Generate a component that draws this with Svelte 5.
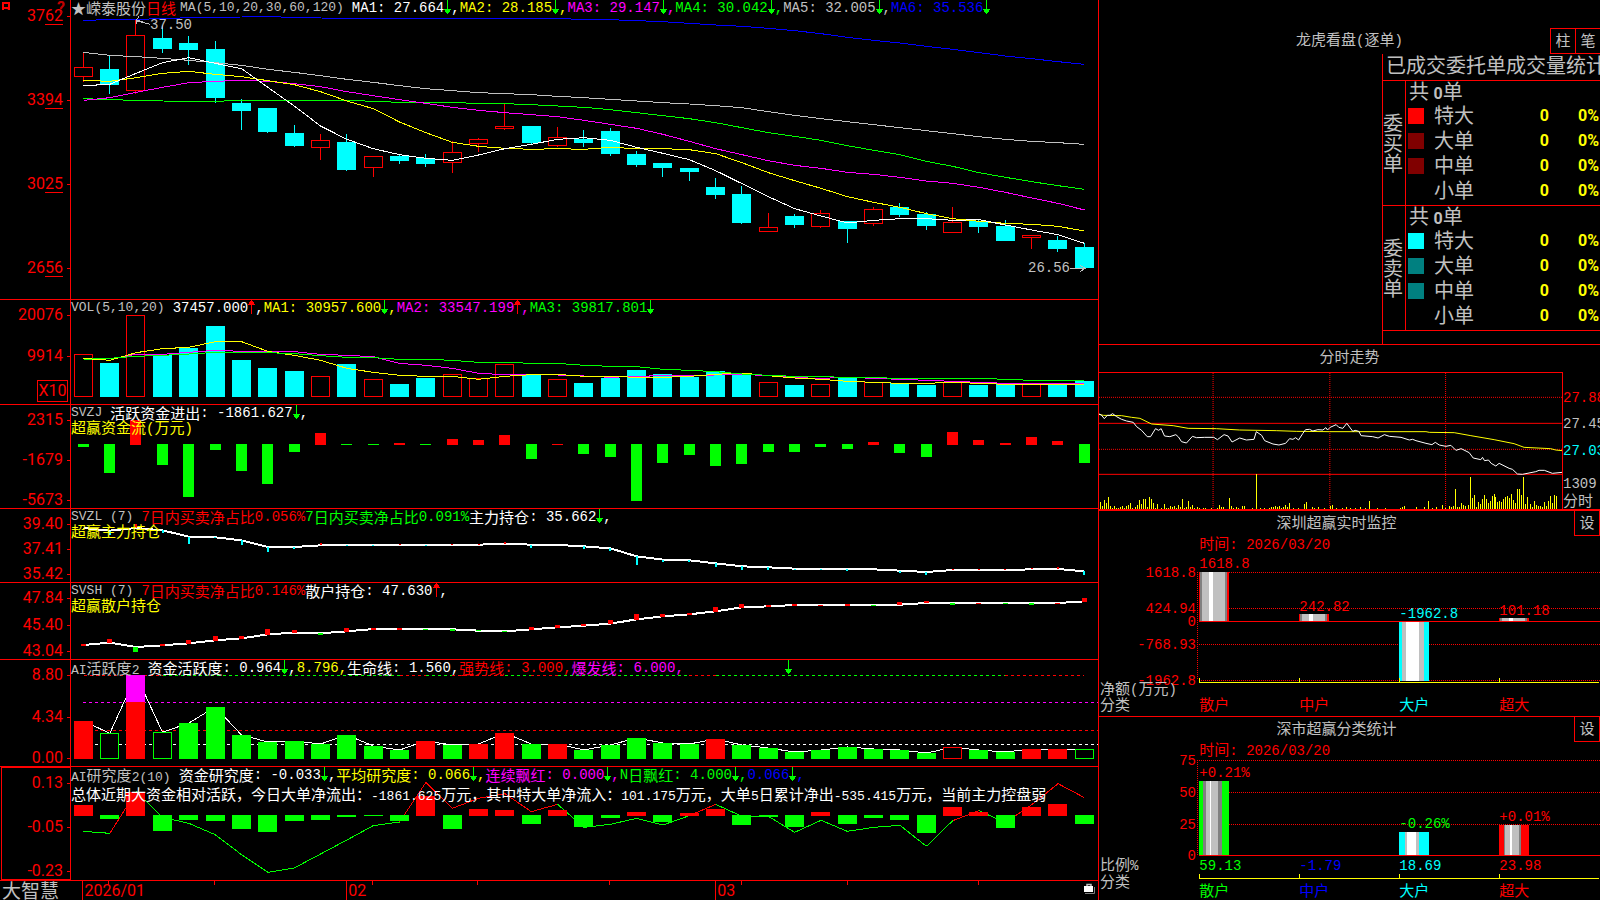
<script lang="ts">
	type Part = { t: string; c?: string; dir?: 'up' | 'down'; comma?: boolean };
	type Label = { x: number; y: number; t: string; c: string; end?: boolean };

	const STEP = 26.34;
	const X = (i: number) => 12.5 + STEP * i;
	const left = (i: number, w: number) => Math.round(X(i) - w / 2 - 0.2);
	const path = (ys: number[]) => ys.map((y, i) => `${X(i)},${y}`).join(' ');

	// Splits a string into runs of Chinese and of latin characters
	const runs = (s: string) => s.match(/[\u3000-\u9fff\uff00-\uffef]+|[^\u3000-\u9fff\uff00-\uffef]+/g) ?? [];
	const isHan = (s: string) => /^[\u3000-\u9fff\uff00-\uffef]/.test(s);

	// up?, body top, body bottom, high, low
	const candles = [
		[1,202,230,157,245],[0,207,255,167,282],[1,106,272,60,282],[0,114,147,75,159],[0,129,150,108,195],
		[0,147,294,123,309],[0,309,333,297,390],[0,324,396,324,399],[0,399,438,375,441],[1,421,443,402,480],
		[0,426,510,402,513],[1,469,503,469,531],[0,468,483,462,492],[0,474,492,462,501],[1,457,488,423,519],
		[1,418,431,414,456],[1,379,386,312,390],[0,378,429,378,432],[1,412,437,381,440],[0,417,429,390,441],
		[0,393,462,384,468],[0,462,495,453,501],[0,489,504,489,531],[0,504,516,504,543],[0,561,585,534,597],
		[0,582,669,558,672],[1,682,695,639,695],[0,648,675,642,684],[1,640,680,630,684],[0,663,687,663,729],
		[1,628,671,621,678],[0,621,645,609,651],[0,642,678,636,690],[1,667,698,621,698],[0,663,681,660,699],
		[0,678,723,660,723],[1,706,713,706,747],[0,720,747,708,756],[0,741,804,729,804]
	];

	const averages = [
		{ c: 'blue', y: [61,59,58,56,53,52,51,49,53,54,55,55,55,55,55,55,55,55,56,58,59,62,65,70,75,79,85,92,101,112,121,129,139,148,158,168,176,185,193] },
		{ c: 'gray', y: [157,166,170,175,181,188,196,208,217,227,238,247,257,266,272,278,281,284,289,293,298,303,308,312,317,323,335,346,356,365,374,383,392,401,410,418,424,428,433] },
		{ c: 'green', y: [296,299,301,303,304,304,301,301,301,301,301,304,307,307,308,310,311,314,318,322,329,338,347,356,368,383,398,409,421,437,451,464,484,499,518,532,545,557,568] },
		{ c: 'magenta', y: [301,293,277,262,248,244,241,244,251,260,275,287,299,310,322,331,338,344,350,361,373,385,403,424,446,464,482,496,505,517,523,532,543,550,562,577,594,610,630] },
		{ c: 'yellow', y: [241,244,233,220,214,223,230,242,254,275,303,326,366,398,427,439,445,448,446,448,442,446,446,449,461,488,518,542,565,590,607,622,641,656,664,670,673,679,693] },
		{ c: 'white', y: [257,253,220,188,173,190,206,262,318,378,418,446,464,475,481,465,446,433,418,413,421,442,460,479,512,551,590,626,648,669,661,656,656,661,659,675,690,704,730] }
	];

	const volumes = [193,219,76,195,174,108,210,234,243,259,222,268,282,264,253,265,223,255,268,279,264,240,252,261,243,252,276,286,283,261,277,279,285,277,285,282,283,285,273];
	const volumeAverages = [
		{ c: 'magenta', y: [205,207,193,193,187,181,184,185,185,193,196,200,220,226,235,250,254,254,255,258,262,259,257,256,255,253,257,263,265,262,265,268,271,274,277,280,280,280,280] },
		{ c: 'yellow', y: [205,211,188,176,172,155,155,184,196,211,235,247,256,259,259,268,259,254,253,259,259,262,262,259,253,249,257,264,268,274,277,280,280,277,280,283,283,283,283] },
		{ c: 'green', y: [208,205,199,196,192,187,187,188,191,197,202,203,208,208,211,217,217,220,220,226,229,230,238,241,245,252,256,259,260,262,263,265,265,265,265,268,271,271,271] }
	];

	// Bars that hang below the zero line are green, those above it red
	const flow = [471,549,390,525,621,480,543,582,486,429,465,465,459,465,447,450,435,507,462,492,501,633,519,495,528,522,486,486,471,477,456,489,501,426,450,459,441,453,519];
	const research = [465,507,426,543,510,513,537,546,513,510,501,499,513,438,537,477,480,522,480,531,504,486,516,489,477,525,501,531,486,522,504,510,549,471,486,534,471,462,522];

	const mainHold = [84,92,84,91,110,112,121,141,141,136,135,135,135,135,135,134,131,134,135,139,145,169,179,181,190,199,202,206,207,207,208,212,216,210,210,210,208,207,214];
	const mainTicks = [
		[1,104],[3,98],[4,132],[5,114],[6,134],[7,155],[8,146],[10,138],[11,138],[13,138],[17,143],[19,147],[20,153],[21,195],[22,185],[23,185],
		[24,201],[25,209],[26,209],[27,209],[28,210],[29,212],[31,218],[32,225],[38,225],
		[2,72],[9,129],[12,133],[14,132],[15,131],[16,126],[30,206],[33,206],[34,207],[35,208],[36,204],[37,201]
	];

	const retailHold = [435,428,441,436,430,421,415,403,398,400,394,387,386,387,388,392,394,388,382,377,371,358,349,343,334,322,319,315,315,315,316,314,309,309,309,309,309,309,304];
	const retailMarks = [
		[432,438],[417,429],[441,456],[432,438],[420,432],[408,423],[408,417],[387,405],[390,399],[399,405],[384,396],[384,390],[384,390],
		[387,390],[387,393],[390,393],[393,396],[381,390],[375,384],[372,378],[360,372],[342,360],[342,351],[339,345],[321,336],[312,324],
		[315,321],[312,318],[315,318],[312,318],[315,318],[306,315],[303,309],[309,315],[309,312],[309,312],[309,315],[309,312],[294,306]
	];
	const retailGreen = [2, 9, 13, 14, 15, 16, 30, 33, 35, 36];

	const active = [213,250,76,247,219,171,255,276,273,282,255,288,300,273,285,282,249,282,282,300,285,264,279,282,267,285,294,306,300,291,297,300,309,292,300,306,297,297,298];
	const activeRed = [0, 2, 13, 15, 16, 18, 24, 33, 36, 37];
	const activeHollow = [1, 3, 33, 38];
	// Turning points of the colour of the top dashed line
	const topDashes = [0, 3, 12, 13, 14, 16, 17, 18, 23, 24, 35, 38];

	const researchLine = [544,550,425,502,520,554,614,667,654,612,570,527,516,397,475,445,431,485,463,532,523,505,525,497,463,499,499,547,511,544,532,526,589,512,482,518,464,401,443];
	const redLegs = [1, 12, 13, 14, 15, 16, 17, 23, 33, 35, 36, 37];

	const months = [{ i: 0, t: '2026/01' }, { i: 10, t: '02' }, { i: 24, t: '03' }];
	const weeks = [1, 5, 11, 15, 20, 25, 29, 34];

	const mainHead: Part[] = [
		{ t: 'MA1: 27.664', c: 'white', dir: 'down', comma: true },
		{ t: 'MA2: 28.185', c: 'yellow', dir: 'down', comma: true },
		{ t: 'MA3: 29.147', c: 'magenta', dir: 'down', comma: true },
		{ t: 'MA4: 30.042', c: 'green', dir: 'down', comma: true },
		{ t: 'MA5: 32.005', c: 'gray', dir: 'down', comma: true },
		{ t: 'MA6: 35.536', c: 'blue', dir: 'down' }
	];
	const volHead: Part[] = [
		{ t: '37457.000', c: 'white', dir: 'up', comma: true },
		{ t: 'MA1: 30957.600', c: 'yellow', dir: 'down', comma: true },
		{ t: 'MA2: 33547.199', c: 'magenta', dir: 'up', comma: true },
		{ t: 'MA3: 39817.801', c: 'green', dir: 'down' }
	];
	const flowHead: Part[] = [{ t: '活跃资金进出: -1861.627', c: 'white', dir: 'down', comma: true }];
	const mainHoldHead: Part[] = [
		{ t: '7日内买卖净占比0.056%', c: 'red' },
		{ t: '7日内买卖净占比0.091%', c: 'green' },
		{ t: '主力持仓: 35.662', c: 'white', dir: 'down', comma: true }
	];
	const retailHead: Part[] = [
		{ t: '7日内买卖净占比0.146%', c: 'red' },
		{ t: '散户持仓: 47.630', c: 'white', dir: 'up', comma: true }
	];
	const activeHead: Part[] = [
		{ t: '资金活跃度: 0.964', c: 'white', dir: 'down', comma: true },
		{ t: '8.796,', c: 'yellow' },
		{ t: '生命线: 1.560,', c: 'white' },
		{ t: '强势线: 3.000,', c: 'red' },
		{ t: '爆发线: 6.000,', c: 'magenta' },
		{ t: '            ', dir: 'down' }
	];
	const researchHead: Part[] = [
		{ t: '资金研究度: -0.033', c: 'white', dir: 'down', comma: true },
		{ t: '平均研究度: 0.066', c: 'yellow', dir: 'down', comma: true },
		{ t: '连续飘红: 0.000', c: 'magenta', dir: 'down', comma: true },
		{ t: 'N日飘红: 4.000', c: 'green', dir: 'down', comma: true },
		{ t: '0.066', c: 'blue', dir: 'down', comma: true }
	];

	const orders = [
		{ side: '委买单', swatches: ['#f00', '#800000', '#800000', 'transparent'] },
		{ side: '委卖单', swatches: ['#0ff', '#008080', '#008080', 'transparent'] }
	];
	const sizes = ['特大', '大单', '中单', '小单'];

	const avgPrice = '27,223 40,226 95,227 125,232 150,235 185,252 250,257 295,265 380,266 450,270 560,272 620,274 720,275 1010,275 1020,277 1095,278 1145,287 1215,299 1275,311 1305,322 1385,326 1400,330 1420,332';
	const price = '27,222 34,225 43,236 52,226 60,226 68,221 80,230 95,238 110,243 130,247 140,260 155,271 172,290 182,290 197,266 206,271 214,266 224,288 240,290 258,284 266,291 275,305 290,309 308,289 320,293 345,292 372,292 383,299 403,284 415,288 427,306 450,294 470,300 493,298 500,275 516,286 525,302 550,312 568,315 588,310 600,296 610,298 618,293 627,300 640,280 648,269 660,268 670,273 685,269 700,270 709,263 714,270 722,262 740,254 748,262 760,265 772,250 790,274 797,271 808,274 815,287 850,290 866,294 885,284 900,289 935,292 960,300 970,298 980,302 1010,310 1028,314 1038,307 1050,315 1070,319 1085,316 1100,331 1116,326 1140,338 1152,354 1175,359 1180,352 1186,362 1198,360 1206,370 1220,378 1230,370 1260,385 1270,388 1285,402 1300,403 1340,395 1350,391 1366,391 1390,400 1420,397';
	const ticks = [
		[31,486],[37,499],[43,480],[49,490],[55,471],[61,498],[67,504],[73,498],[79,504],[85,504],[91,501],[97,498],[103,504],[109,498],[115,495],[121,489],
		[127,504],[136,501],[142,495],[148,480],[154,492],[160,477],[166,477],[172,501],[178,471],[184,477],[190,489],[196,504],[202,492],[214,504],[223,492],
		[229,504],[235,504],[241,498],[247,501],[253,498],[259,504],[265,495],[271,501],[277,477],[283,504],[289,501],[295,483],[301,501],[307,495],[313,504],
		[322,501],[328,504],[340,504],[346,504],[364,504],[382,504],[388,495],[394,501],[400,501],[418,474],[424,498],[430,504],[439,501],[445,504],[457,498],
		[463,498],[487,504],[499,402],[511,504],[523,504],[538,504],[544,501],[550,501],[556,498],[562,501],[568,498],[574,504],[580,501],[586,495],[592,501],
		[598,489],[610,504],[625,504],[643,492],[649,486],[667,501],[673,504],[685,501],[703,504],[724,498],[730,495],[742,504],[760,504],[772,501],[784,504],
		[799,504],[814,501],[829,504],[841,483],[865,504],[889,504],[934,504],[940,501],[946,498],[982,501],[1006,501],[1018,483],[1030,504],[1042,501],
		[1060,495],[1069,504],[1081,498],[1087,501],[1093,498],[1099,447],[1105,501],[1111,501],[1117,489],[1123,495],[1129,498],[1138,495],[1144,411],
		[1150,474],[1156,465],[1162,501],[1168,486],[1174,492],[1180,477],[1186,465],[1192,477],[1198,489],[1204,483],[1210,468],[1216,462],[1219,471],
		[1225,486],[1231,483],[1237,486],[1243,477],[1249,471],[1255,468],[1261,474],[1267,462],[1273,480],[1279,489],[1285,447],[1291,447],[1297,465],
		[1303,411],[1309,492],[1315,471],[1324,492],[1330,501],[1336,483],[1342,495],[1348,498],[1354,498],[1360,501],[1366,486],[1372,498],[1378,483],
		[1384,468],[1390,489],[1396,465],[1402,468]
	];

	const netLabels: Label[] = [
		{ x: 328, y: 116, t: '时间: 2026/03/20', c: 'red' },
		{ x: 318, y: 205, t: '1618.8', c: 'red', end: true },
		{ x: 318, y: 313, t: '424.94', c: 'red', end: true },
		{ x: 318, y: 352, t: '0', c: 'red', end: true },
		{ x: 318, y: 421, t: '-768.93', c: 'red', end: true },
		{ x: 318, y: 529, t: '-1962.8', c: 'red', end: true },
		{ x: 328, y: 178, t: '1618.8', c: 'red' },
		{ x: 628, y: 305, t: '242.82', c: 'red' },
		{ x: 928, y: 326, t: '-1962.8', c: 'cyan' },
		{ x: 1228, y: 317, t: '101.18', c: 'red' },
		{ x: 30, y: 553, t: '净额(万元)', c: 'gray' },
		{ x: 30, y: 601, t: '分类', c: 'gray' },
		{ x: 328, y: 601, t: '散户', c: 'red' },
		{ x: 628, y: 601, t: '中户', c: 'red' },
		{ x: 928, y: 601, t: '大户', c: 'cyan' },
		{ x: 1228, y: 601, t: '超大', c: 'red' }
	];
	const shareLabels: Label[] = [
		{ x: 328, y: 149, t: '时间: 2026/03/20', c: 'red' },
		{ x: 318, y: 184, t: '75', c: 'red', end: true },
		{ x: 318, y: 280, t: '50', c: 'red', end: true },
		{ x: 318, y: 376, t: '25', c: 'red', end: true },
		{ x: 318, y: 468, t: '0', c: 'red', end: true },
		{ x: 328, y: 220, t: '+0.21%', c: 'red' },
		{ x: 928, y: 373, t: '-0.26%', c: 'green' },
		{ x: 1228, y: 352, t: '+0.01%', c: 'red' },
		{ x: 328, y: 497, t: '59.13', c: 'green' },
		{ x: 628, y: 497, t: '-1.79', c: 'blue' },
		{ x: 928, y: 497, t: '18.69', c: 'cyan' },
		{ x: 1228, y: 497, t: '23.98', c: 'red' },
		{ x: 30, y: 494, t: '比例%', c: 'gray' },
		{ x: 30, y: 546, t: '分类', c: 'gray' },
		{ x: 328, y: 572, t: '散户', c: 'green' },
		{ x: 628, y: 572, t: '中户', c: 'blue' },
		{ x: 928, y: 572, t: '大户', c: 'cyan' },
		{ x: 1228, y: 572, t: '超大', c: 'red' }
	];

	// Each cylinder is a row of vertical stripes: [start, colour]
	type Cylinder = { x: number; y: number; b: number; s: [number, string][] };
	const redTube: [number, string][] = [[0, '#f00'], [3, '#808080'], [9, '#c0c0c0'], [30, '#fff'], [42, '#c0c0c0'], [78, '#808080'], [84, '#f00']];
	const netBars: Cylinder[] = [
		{ x: 327, y: 201, b: 348, s: redTube },
		{ x: 627, y: 327, b: 348, s: redTube },
		{ x: 927, y: 351, b: 528, s: [[0, '#0ff'], [9, '#c0c0c0'], [21, '#fff'], [60, '#c0c0c0'], [75, '#0ff']] },
		{ x: 1227, y: 339, b: 348, s: redTube }
	];
	const shareBars: Cylinder[] = [
		{ x: 327, y: 243, b: 465, s: [[0, '#0f0'], [12, '#808080'], [21, '#c0c0c0'], [33, '#fff'], [36, '#c0c0c0'], [57, '#808080'], [69, '#0f0']] },
		{ x: 927, y: 396, b: 465, s: [[0, '#0ff'], [18, '#c0c0c0'], [24, '#fff'], [51, '#c0c0c0'], [60, '#0ff']] },
		{ x: 1227, y: 375, b: 465, s: [[0, '#f00'], [15, '#808080'], [18, '#c0c0c0'], [33, '#fff'], [39, '#c0c0c0'], [60, '#808080'], [66, '#f00']] }
	];
</script>

{#snippet rich(text: string)}{#each runs(text) as run}<span class:han={isHan(run)}>{run}</span>{/each}{/snippet}

{#snippet legend(parts: Part[])}
	{#each parts as p}
		<span class="part {p.c ?? ''}">{@render rich(p.t)}{#if p.dir}<svg class="arrow {p.dir}" viewBox="0 0 7 14" aria-hidden="true"><path d="M3 0H4V9H7V10H6V12H5V13H4V14H3V13H2V12H1V10H0V9H3Z" /></svg>{/if}{#if p.comma}<span>,</span>{/if}</span>
	{/each}
{/snippet}

{#snippet axis(top: number, span: number, marks: { y: number; t: string; fine?: boolean }[])}
	<div class="axis">
		{#each marks as m}
			<span class="mark" style="top: {((m.y - top) / span) * 100}%">
				{#if m.fine}{m.t.slice(0, -2)}<u>{m.t.slice(-2)}</u>{:else}{m.t}{/if}
			</span>
		{/each}
	</div>
{/snippet}

{#snippet columns(values: number[], zero: number, w: number)}
	{#each values as v, i}
		{#if v < zero + 3}
			<rect class="fill-red" x={left(i, w)} y={v} width={w} height={zero + 3 - v} />
		{:else}
			<rect class="fill-green" x={left(i, w)} y={zero} width={w} height={v - zero} />
		{/if}
	{/each}
{/snippet}

{#snippet tubes(bars: Cylinder[])}
	{#each bars as bar}
		{#each bar.s as [at, fill], k}
			<rect x={bar.x + at} y={bar.y} width={(bar.s[k + 1]?.[0] ?? 90) - at} height={bar.b - bar.y} {fill} />
		{/each}
	{/each}
{/snippet}

{#snippet labels(list: Label[], top: number, span: number)}
	{#each list as l}
		<span
			class="label {l.c}"
			class:end={l.end}
			style="left: {((l.x - 27) / 1503) * 100}%; top: {((l.y - top) / span) * 100}%"
		>{@render rich(l.t)}</span>
	{/each}
{/snippet}

<main class="terminal">
	<div class="charts">
		<section class="panel">
			{@render axis(0, 897, [{ y: 49, t: '3762', fine: true }, { y: 301, t: '3394', fine: true }, { y: 553, t: '3025', fine: true }, { y: 805, t: '2656', fine: true }])}
			<svg class="corner" viewBox="0 0 8 8" aria-hidden="true"><path d="M1 1H7V6H1ZM1 6V8M6 7L8 8" /></svg>
			<span class="help">?</span>
			<div class="plot">
				<svg class="chart" viewBox="0 0 1027 897" preserveAspectRatio="none" aria-hidden="true">
					{#each candles as [up, top, bottom, high, low], i}
						{@const cx = left(i, 19) + 9.5}
						{#if up}
							<path class="red" d="M{cx} {high}V{top}M{cx} {bottom}V{low}M{cx - 9} {top}h18V{bottom}h-18Z" />
						{:else}
							<path class="cyan" d="M{cx} {high}V{low}" />
							<rect class="fill-cyan" x={cx - 9.5} y={top} width="19" height={bottom - top} />
						{/if}
					{/each}
					{#each averages as a}
						<polyline class={a.c} points={path(a.y)} />
					{/each}
					<path class="gray" d="M65 62L79 73M65 62L68 50M65 62L72 64M65 62L66 72M999 805H1013M1009 796L1014 805L1009 815" />
				</svg>
				<header class="legend">
					<span class="star">★</span><span class="name stock">{@render rich('嵘泰股份')}<b class="red">{@render rich('日线')}</b></span>
					<span class="name">MA(5,10,20,30,60,120)</span>
					{@render legend(mainHead)}
				</header>
				<span class="tag high">37.50</span>
				<span class="tag low">26.56</span>
			</div>
		</section>

		<section class="panel">
			{@render axis(30, 312, [{ y: 76, t: '20076' }, { y: 199, t: '9914' }])}
			<span class="unit">X10</span>
			<div class="plot">
				<svg class="chart" viewBox="0 30 1027 312" preserveAspectRatio="none" aria-hidden="true">
					{#each volumes as v, i}
						{#if candles[i][0]}
							<path class="red" d="M{left(i, 19) + 0.5} {v}h18V319.500h-18Z" />
						{:else}
							<rect class="fill-cyan" x={left(i, 19)} y={v} width="19" height={321 - v} />
						{/if}
					{/each}
					{#each volumeAverages as a}
						<polyline class={a.c} points={path(a.y)} />
					{/each}
				</svg>
				<header class="legend"><span class="name">VOL(5,10,20)</span>{@render legend(volHead)}</header>
			</div>
		</section>

		<section class="panel">
			{@render axis(345, 309, [{ y: 391, t: '2315' }, { y: 511, t: '-1679' }, { y: 631, t: '-5673' }])}
			<div class="plot">
				<svg class="chart" viewBox="0 345 1027 309" preserveAspectRatio="none" aria-hidden="true">
					{@render columns(flow, 462, 11)}
				</svg>
				<header class="legend"><span class="name">SVZJ </span>{@render legend(flowHead)}</header>
				<p class="yellow">{@render rich('超赢资金流(万元)')}</p>
			</div>
		</section>

		<section class="panel">
			{@render axis(27, 219, [{ y: 73, t: '39.40' }, { y: 148, t: '37.41' }, { y: 223, t: '35.42' }])}
			<div class="plot">
				<svg class="chart" viewBox="0 27 1027 219" preserveAspectRatio="none" aria-hidden="true">
					<polyline class="white thick" points={path(mainHold)} />
					{#each mainTicks as [i, y]}
						<path class="thick {y > mainHold[i] ? 'cyan' : 'red'}" d="M{X(i)} {mainHold[i]}V{y}" />
					{/each}
				</svg>
				<header class="legend"><span class="name">SVZL (7)</span>{@render legend(mainHoldHead)}</header>
				<p class="yellow">{@render rich('超赢主力持仓')}</p>
			</div>
		</section>

		<section class="panel">
			{@render axis(249, 228, [{ y: 295, t: '47.84' }, { y: 376, t: '45.40' }, { y: 454, t: '43.04' }])}
			<div class="plot">
				<svg class="chart" viewBox="0 249 1027 228" preserveAspectRatio="none" aria-hidden="true">
					<polyline class="white thick" points={path(retailHold)} />
					{#each retailMarks as [top, bottom], i}
						<rect class={retailGreen.includes(i) ? 'fill-green' : 'fill-red'} x={left(i, 5)} y={top} width="5" height={bottom - top} />
					{/each}
				</svg>
				<header class="legend"><span class="name">SVSH (7)</span>{@render legend(retailHead)}</header>
				<p class="yellow">{@render rich('超赢散户持仓')}</p>
			</div>
		</section>

		<section class="panel">
			{@render axis(30, 318, [{ y: 76, t: '8.80' }, { y: 202, t: '4.34' }, { y: 325, t: '0.00' }])}
			<div class="plot">
				<svg class="chart" viewBox="0 30 1027 318" preserveAspectRatio="none" aria-hidden="true">
					{#each topDashes.slice(1) as to, k}
						<path class="dash {k % 2 ? 'green' : 'red'}" d="M{X(topDashes[k])} 76H{X(to)}" />
					{/each}
					<path class="dash magenta" d="M12 157H1027" />
					<path class="dash red" d="M12 241H1027" />
					<path class="dash white" d="M12 283H1027" />
					<polyline class="white" points={path(active)} />
					{#each active as y, i}
						{@const tone = activeRed.includes(i) ? 'red' : 'green'}
						{#if activeHollow.includes(i)}
							<path class="{tone} hollow" d="M{left(i, 19) + 0.5} {y}h18V325.500h-18Z" />
						{:else}
							<rect class="fill-{tone}" x={left(i, 19)} {y} width="19" height={327 - y} />
						{/if}
					{/each}
					<rect class="fill-magenta" x={left(2, 19)} y="75" width="19" height="81" />
				</svg>
				<header class="legend"><span class="name">{@render rich('AI活跃度2')}</span>{@render legend(activeHead)}</header>
			</div>
		</section>

		<section class="panel selected">
			{@render axis(351, 339, [{ y: 397, t: '0.13' }, { y: 532, t: '-0.05' }, { y: 667, t: '-0.23' }])}
			<div class="plot">
				<svg class="chart" viewBox="0 351 1027 339" preserveAspectRatio="none" aria-hidden="true">
					{#each researchLine.slice(1) as y, i}
						<path class={redLegs.includes(i) ? 'red' : 'green'} d="M{X(i)} {researchLine[i]}L{X(i + 1)} {y}" />
					{/each}
					{@render columns(research, 495, 19)}
				</svg>
				<header class="legend"><span class="name">{@render rich('AI研究度2(10)')}</span>{@render legend(researchHead)}</header>
				<p class="summary">{@render rich('总体近期大资金相对活跃，今日大单净流出：-1861.625万元，其中特大单净流入：101.175万元，大单5日累计净出-535.415万元，当前主力控盘弱')}</p>
			</div>
		</section>

		<footer class="panel timeline">
			<strong class="brand">大智慧</strong>
			<div class="plot">
				<svg class="chart" viewBox="0 0 1027 19" preserveAspectRatio="none" aria-hidden="true">
					{#each months as m}<path class="red" d="M{X(m.i)} 0V19" />{/each}
					{#each weeks as w}<path class="red" d="M{X(w)} 0V4" />{/each}
				</svg>
				{#each months as m}
					<span class="month" style="left: {(X(m.i) / 1027) * 100}%">{m.t}</span>
				{/each}
				<svg class="lock" viewBox="0 0 11 12" aria-hidden="true">
					<path d="M3 5V2.500H7V5" fill="none" stroke="#c0c0c0" stroke-width="1.500" />
					<path d="M1 11.500H10.500V5" fill="none" stroke="#808080" />
					<rect y="4" width="9" height="6" fill="#fff" />
				</svg>
			</div>
		</footer>
	</div>

	<aside class="side">
		<section class="orders">
			<header class="bar">
				<h2>{@render rich('龙虎看盘(逐单)')}</h2>
				<div class="buttons"><button type="button">柱</button><button type="button">笔</button></div>
			</header>
			<div class="stats">
				<h3>已成交委托单成交量统计</h3>
				<table>
					<colgroup><col class="w-dealer" /><col class="w-size" /><col class="w-count" /><col /></colgroup>
					{#each orders as o}
						<tbody>
							<tr>
								<th class="dealer" rowspan="5" scope="rowgroup">{o.side}</th>
								<td class="total" colspan="3">共 <b>0</b>单</td>
							</tr>
							{#each sizes as s, k}
								<tr>
									<th class="size" scope="row"><i style="background: {o.swatches[k]}"></i>{s}</th>
									<td class="num">0</td>
									<td class="num">0%</td>
								</tr>
							{/each}
						</tbody>
					{/each}
				</table>
			</div>
		</section>

		<section class="intraday">
			<header><h2>{@render rich('分时走势')}</h2></header>
			<div class="trend">
				<svg class="chart" viewBox="27 99 1392 408" preserveAspectRatio="none" aria-hidden="true">
					<path class="dot red" d="M27 172H1419M27 328H1419M370 99V507M721 99V507M1069 99V507" />
					<path class="red" d="M27 250H1419M27 403H1419" />
					{#each ticks as [x, y]}<rect class="fill-yellow" x={x - 1} {y} width="3" height={507 - y} />{/each}
					<polyline class="yellow" points={avgPrice} />
					<polyline class="white" points={price} />
				</svg>
			</div>
			<div class="scale">
				<span class="red" style="top: {((177 - 99) / 408) * 100}%">27.88</span>
				<span class="gray" style="top: {((255 - 99) / 408) * 100}%">27.45</span>
				<span class="cyan" style="top: {((333 - 99) / 408) * 100}%">27.03</span>
				<span class="gray" style="top: {((434 - 99) / 408) * 100}%">1309</span>
				<span class="gray" style="top: {((483 - 99) / 408) * 100}%">{@render rich('分时')}</span>
			</div>
		</section>

		<section class="monitor first">
			<header><h2>{@render rich('深圳超赢实时监控')}</h2><button type="button">设</button></header>
			<div class="plot">
				<svg class="chart" viewBox="27 96 1503 537" preserveAspectRatio="none" aria-hidden="true">
					<path class="dot red" d="M328 202H1530M328 310H1530M328 418H1530M328 526H1530M322 202V526" />
					{@render tubes(netBars)}
					<path class="red" d="M328 349H1530" />
					<path class="yellow" d="M328 519V532H1527M628 519V532M928 519V532M1228 519V532" />
				</svg>
				{@render labels(netLabels, 96, 537)}
			</div>
		</section>

		<section class="monitor">
			<header><h2>{@render rich('深市超赢分类统计')}</h2><button type="button">设</button></header>
			<div class="plot">
				<svg class="chart" viewBox="27 129 1503 471" preserveAspectRatio="none" aria-hidden="true">
					<path class="dot red" d="M322 181H1530M322 277H1530M322 373H1530M322 181V466" />
					{@render tubes(shareBars)}
					<path class="red" d="M328 466H1530" />
					<path class="yellow" d="M328 522V535H1527M628 522V535M928 522V535M1228 522V535" />
				</svg>
				{@render labels(shareLabels, 129, 471)}
			</div>
		</section>
	</aside>
</main>

<style>
	:global(body) {
		background: #000;
	}

	.terminal {
		display: grid;
		grid-template-columns: minmax(0, 1099fr) minmax(0, 501fr);
		height: 100vh;
		overflow: hidden;
		background: #000;
		color: #c0c0c0;
		font: 14px/16px "Liberation Mono", "Noto Sans CJK SC", monospace;
	}

	.han {
		font: 15px/16px "Noto Sans CJK SC", sans-serif;
	}

	h2, h3, p {
		margin: 0;
		font-weight: normal;
	}

	/* Colours: text and strokes share one name */
	.red { color: #f00; stroke: #f00; }
	.green { color: #0f0; stroke: #0f0; }
	.blue { color: #00f; stroke: #00f; }
	.cyan { color: #0ff; stroke: #0ff; }
	.yellow { color: #ff0; stroke: #ff0; }
	.magenta { color: #f0f; stroke: #f0f; }
	.white { color: #fff; stroke: #fff; }
	.gray { color: #c0c0c0; stroke: #c0c0c0; }
	.fill-red { fill: #f00; }
	.fill-green { fill: #0f0; }
	.fill-cyan { fill: #0ff; }
	.fill-yellow { fill: #ff0; }
	.fill-magenta { fill: #f0f; }

	.chart {
		position: absolute;
		inset: 0;
		width: 100%;
		height: 100%;
		shape-rendering: crispEdges;
	}
	.chart path, .chart polyline {
		fill: none;
		stroke-width: 1px;
		vector-effect: non-scaling-stroke;
	}
	.chart .hollow { fill: #000; }
	.chart .thick { stroke-width: 2px; }
	.chart .dash { stroke-dasharray: 3 3; }
	.chart .dot { stroke-dasharray: 1 1; }

	/* Left: stacked indicator panels */
	.charts {
		display: grid;
		grid-template-rows: 299fr 105fr 104fr 74fr 77fr 107fr 114fr 20fr;
		grid-template-columns: minmax(0, 1fr);
		border-right: 1px solid #f00;
	}
	.panel {
		position: relative;
		display: grid;
		grid-template-columns: 70px minmax(0, 1fr);
		min-height: 0;
		border-top: 1px solid #f00;
	}
	.panel:first-child {
		border-top: 0;
	}
	.panel .plot {
		border-left: 1px solid #f00;
	}
	.plot {
		position: relative;
		min-width: 0;
		min-height: 0;
	}

	.axis {
		position: relative;
		color: #f00;
		font: 16px/18px Roboto, sans-serif;
	}
	.mark {
		position: absolute;
		right: 0;
		padding-right: 7px;
		transform: translateY(-50%);
	}
	.mark::after {
		content: "";
		position: absolute;
		right: 0;
		top: 50%;
		width: 3px;
		border-top: 1px solid #f00;
	}
	.mark u {
		text-decoration-thickness: 1px;
		text-underline-offset: 3px;
	}
	.selected .axis {
		border: 1px solid #f00;
		border-right: 0;
		margin-left: 1px;
	}
	.unit {
		position: absolute;
		left: 37px;
		bottom: 2px;
		box-sizing: border-box;
		width: 31px;
		height: 22px;
		border: 1px solid #f00;
		color: #f00;
		font: 16px/20px Roboto, sans-serif;
		text-align: center;
	}
	.corner {
		position: absolute;
		left: 2px;
		top: 2px;
		width: 8px;
		height: 8px;
		fill: none;
		stroke: #f00;
		stroke-width: 2px;
	}
	.help {
		position: absolute;
		left: 57px;
		top: 0;
		color: #c00000;
		font: bold 16px/16px Roboto, sans-serif;
	}

	.legend {
		position: relative;
		display: flex;
		height: 14px;
		white-space: pre;
	}
	.name {
		margin-right: 8px;
		font-size: 13px;
	}
	.name.stock {
		margin-right: 4px;
	}
	.name b {
		font-weight: normal;
	}
	.star {
		width: 15px;
		font: 15px/16px "Noto Sans CJK SC", sans-serif;
	}
	.part {
		display: flex;
	}
	.arrow {
		width: 7px;
		height: 14px;
		fill: #0f0;
		stroke: none;
		shape-rendering: crispEdges;
	}
	.arrow.up {
		fill: #f00;
		transform: rotate(180deg);
	}
	.plot p {
		position: relative;
		line-height: 15px;
		white-space: nowrap;
	}
	.plot .summary {
		margin-top: 5px;
		color: #fff;
		font-size: 13px;
	}
	.tag {
		position: absolute;
	}
	.tag.high {
		left: 79px;
		top: 17px;
	}
	.tag.low {
		right: 28px;
		top: 87%;
	}

	.timeline .plot {
		border-left: 0;
	}
	.brand {
		padding-left: 2px;
		font: 19px/17px "Noto Sans CJK SC", sans-serif;
		white-space: nowrap;
	}
	.month {
		position: absolute;
		top: 0;
		padding-left: 2px;
		color: #f00;
		font: 16px/19px Roboto, sans-serif;
	}
	.lock {
		position: absolute;
		right: 3px;
		top: 1px;
		width: 11px;
		height: 12px;
	}

	/* Right: order statistics and fund monitors */
	.side {
		display: grid;
		grid-template-rows: 344fr 165fr 207fr 184fr;
		grid-template-columns: minmax(0, 1fr);
		overflow: hidden;
	}
	.side section {
		min-height: 0;
		min-width: 0;
	}
	button {
		box-sizing: border-box;
		width: 26px;
		height: 26px;
		padding: 0 0 3px;
		border: 1px solid #f00;
		background: #000;
		color: #c0c0c0;
		font: 15px/20px "Noto Sans CJK SC", sans-serif;
	}

	.orders {
		display: flex;
		flex-direction: column;
		padding-top: 28px;
	}
	.bar {
		display: grid;
		grid-template-columns: 1fr auto 1fr;
		align-items: center;
		height: 26px;
	}
	.bar h2 {
		grid-column: 2;
	}
	.buttons {
		display: flex;
		justify-content: flex-end;
	}
	.buttons button + button {
		width: 25px;
		margin-left: -1px;
		border-right: 0;
	}
	.stats {
		flex: 1;
		align-self: flex-end;
		width: 217px;
		overflow: hidden;
		border-left: 1px solid #f00;
		font: 20px/20px "Noto Sans CJK SC", sans-serif;
	}
	.stats h3 {
		height: 26px;
		padding-left: 3px;
		font-size: 20px;
		line-height: 22px;
		white-space: nowrap;
	}
	table {
		width: 100%;
		table-layout: fixed;
		border-spacing: 0;
		border-bottom: 1px solid #f00;
	}
	.w-dealer { width: 23px; }
	.w-size { width: 78px; }
	.w-count { width: 66px; }
	td, th {
		box-sizing: border-box;
		height: 25px;
		padding: 0;
		font-weight: normal;
		vertical-align: top;
	}
	.dealer {
		padding-right: 2px;
		border-top: 1px solid #f00;
		border-right: 1px solid #f00;
		vertical-align: middle;
		word-break: break-all;
	}
	.total {
		padding-left: 3px;
		border-top: 1px solid #f00;
	}
	.total b {
		font: bold 16px/20px Roboto, sans-serif;
	}
	.size {
		padding-left: 2px;
		text-align: left;
		white-space: nowrap;
	}
	.size i {
		display: inline-block;
		width: 16px;
		height: 16px;
		margin-right: 10px;
		vertical-align: -1px;
	}
	.num {
		padding-right: 1px;
		color: #ff0;
		font: bold 16px/21px Roboto, sans-serif;
		text-align: right;
	}

	.intraday {
		display: grid;
		grid-template-columns: minmax(0, 1fr) 37px;
		grid-template-rows: 27px minmax(0, 1fr);
		border-top: 1px solid #f00;
	}
	.intraday header {
		grid-column: 1 / -1;
	}
	h2 {
		font-size: 14px;
		line-height: 26px;
		text-align: center;
	}
	.trend {
		position: relative;
		border: solid #f00;
		border-width: 1px 1px 0 0;
	}
	.scale {
		position: relative;
		overflow: hidden;
	}
	.scale > span {
		position: absolute;
		left: 0;
		transform: translateY(-50%);
		white-space: nowrap;
	}

	.monitor {
		display: grid;
		grid-template-rows: 26px minmax(0, 1fr);
		border-top: 1px solid #f00;
	}
	.monitor.first {
		border-top-width: 2px;
	}
	.monitor header {
		display: flex;
	}
	.monitor h2 {
		flex: 1;
	}
	.monitor button {
		margin-top: -1px;
	}
	.label {
		position: absolute;
		transform: translateY(-50%);
		white-space: pre;
	}
	.label.end {
		transform: translate(-100%, -50%);
	}
</style>
